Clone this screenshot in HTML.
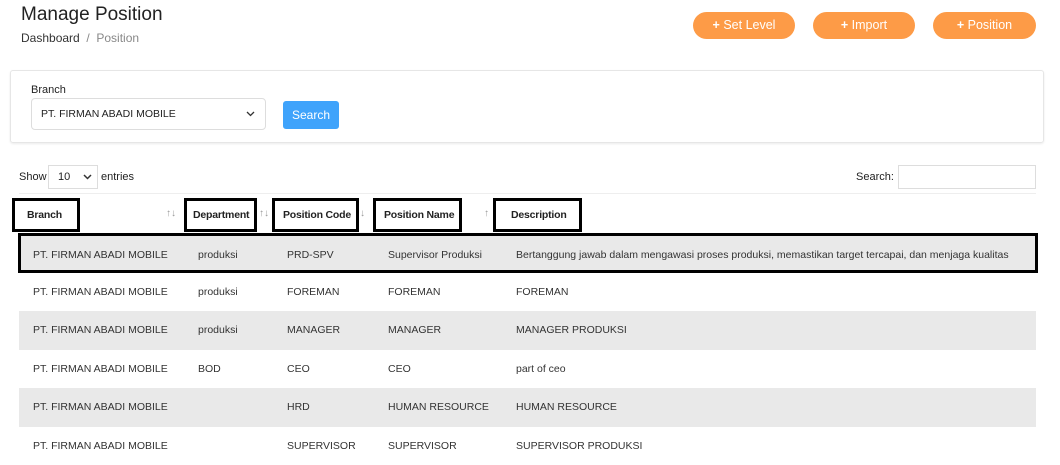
<!DOCTYPE html>
<html><head><meta charset="utf-8"><style>
*{box-sizing:border-box;margin:0;padding:0}
body{width:1060px;height:465px;overflow:hidden;background:#fff;font-family:"Liberation Sans",sans-serif;color:#222;position:relative}
.a{position:absolute;white-space:nowrap}
.btn{position:absolute;top:12px;height:27px;border-radius:14px;background:#fd9b47;color:#fff;font-size:12.5px;line-height:27px;text-align:center}
.hb{position:absolute;top:198px;height:34px;border:3px solid #000;font-weight:bold;font-size:10.5px;line-height:28px;padding-left:12px;background:#fff;white-space:nowrap;overflow:hidden;letter-spacing:-0.2px}
.row{position:absolute;left:19px;width:1017px;height:38.5px;font-size:10.5px;color:#333}
.row span{position:absolute;top:13px;white-space:nowrap}
.g{background:#e9e9e9}
.s{position:absolute;font-size:10px;color:#999;top:208px}
</style></head><body>
<div class="a" style="left:21px;top:4px;font-size:19px;color:#222">Manage Position</div>
<div class="a" style="left:21px;top:31px;font-size:12px;color:#333">Dashboard <span style="color:#888">&nbsp;/&nbsp; Position</span></div>
<div class="btn" style="left:693px;width:102px"><b>+</b> Set Level</div>
<div class="btn" style="left:813px;width:102px"><b>+</b> Import</div>
<div class="btn" style="left:933px;width:103px"><b>+</b> Position</div>
<div class="a" style="left:10px;top:70px;width:1034px;height:73px;border:1px solid #e6e6e6;border-radius:3px;box-shadow:0 1px 2px rgba(0,0,0,.08)"></div>
<div class="a" style="left:31px;top:84px;font-size:11px">Branch</div>
<div class="a" style="left:31px;top:98px;width:235px;height:32px;border:1px solid #ddd;border-radius:4px;font-size:10.5px;line-height:30px;padding-left:9px">PT. FIRMAN ABADI MOBILE<svg style="position:absolute;right:10px;top:12px" width="9" height="6" viewBox="0 0 9 6"><path d="M1 1l3.5 3.5L8 1" fill="none" stroke="#333" stroke-width="1.3"/></svg></div>
<div class="a" style="left:283px;top:101px;width:56px;height:28px;background:#3fa3fb;border-radius:3px;color:#fff;font-size:12px;line-height:28px;text-align:center">Search</div>
<div class="a" style="left:19px;top:171px;font-size:11px">Show</div>
<div class="a" style="left:48px;top:165px;width:50px;height:24px;border:1px solid #ddd;font-size:11px;line-height:22px;padding-left:9px">10<svg style="position:absolute;right:5px;top:8px" width="9" height="6" viewBox="0 0 9 6"><path d="M1 1l3.5 3.5L8 1" fill="none" stroke="#333" stroke-width="1.5"/></svg></div>
<div class="a" style="left:101px;top:171px;font-size:11px">entries</div>
<div class="a" style="left:856px;top:171px;font-size:11px">Search:</div>
<div class="a" style="left:898px;top:165px;width:138px;height:24px;border:1px solid #ddd"></div>
<div class="a" style="left:19px;top:193px;width:1017px;height:1px;background:#eee"></div>
<div class="hb" style="left:12px;width:68px">Branch</div>
<div class="s" style="left:166px">↑↓</div>
<div class="hb" style="left:184px;width:73px;padding-left:6px">Department</div>
<div class="s" style="left:259px">↑↓</div>
<div class="hb" style="left:272px;width:87px;padding-left:8px">Position Code</div>
<div class="s" style="left:360px">↓</div>
<div class="hb" style="left:373px;width:89px;padding-left:8px">Position Name</div>
<div class="s" style="left:484px">↑</div>
<div class="hb" style="left:493px;width:89px;padding-left:15px">Description</div>
<div class="row g" style="top:233px;left:18px;width:1020px;height:40px;border:3px solid #000"><span style="left:12px">PT. FIRMAN ABADI MOBILE</span><span style="left:177px">produksi</span><span style="left:266px">PRD-SPV</span><span style="left:367px">Supervisor Produksi</span><span style="left:495px">Bertanggung jawab dalam mengawasi proses produksi, memastikan target tercapai, dan menjaga kualitas</span></div>
<div class="row" style="top:273px"><span style="left:14px">PT. FIRMAN ABADI MOBILE</span><span style="left:179px">produksi</span><span style="left:268px">FOREMAN</span><span style="left:369px">FOREMAN</span><span style="left:497px">FOREMAN</span></div>
<div class="row g" style="top:311px"><span style="left:14px">PT. FIRMAN ABADI MOBILE</span><span style="left:179px">produksi</span><span style="left:268px">MANAGER</span><span style="left:369px">MANAGER</span><span style="left:497px">MANAGER PRODUKSI</span></div>
<div class="row" style="top:349.5px"><span style="left:14px">PT. FIRMAN ABADI MOBILE</span><span style="left:179px">BOD</span><span style="left:268px">CEO</span><span style="left:369px">CEO</span><span style="left:497px">part of ceo</span></div>
<div class="row g" style="top:388px"><span style="left:14px">PT. FIRMAN ABADI MOBILE</span><span style="left:268px">HRD</span><span style="left:369px">HUMAN RESOURCE</span><span style="left:497px">HUMAN RESOURCE</span></div>
<div class="row" style="top:426.5px"><span style="left:14px">PT. FIRMAN ABADI MOBILE</span><span style="left:268px">SUPERVISOR</span><span style="left:369px">SUPERVISOR</span><span style="left:497px">SUPERVISOR PRODUKSI</span></div>
</body></html>
